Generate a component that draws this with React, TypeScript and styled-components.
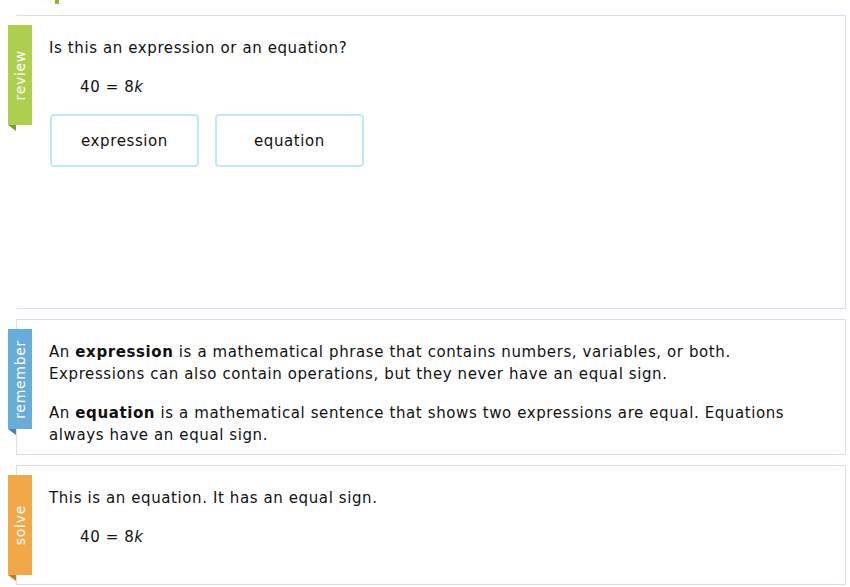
import React from "react";
import styled, { createGlobalStyle } from "styled-components";

const Global = createGlobalStyle`
  html, body { margin: 0; padding: 0; background: #ffffff; }
  body { font-family: "DejaVu Sans", Verdana, sans-serif; color: #111; }
`;

const Page = styled.div`
  width: 850px;
  padding: 0 0 0 8px;
  box-sizing: border-box;
  display: flex;
  flex-direction: column;
`;

const Stem = styled.div`
  width: 4px;
  height: 4px;
  margin: 0 0 11px 47px;
  background: #8fb63c;
`;

const Card = styled.section<{ $h: number; $gapped?: boolean }>`
  position: relative;
  box-sizing: border-box;
  width: 830px;
  min-height: ${(p) => p.$h}px;
  margin: 0 0 10px 8px;
  border: 1px solid #dedaf6;
  ${(p) =>
    p.$gapped
      ? `border-left-color: transparent;
         background: linear-gradient(to bottom,
           #dedaf6 0, #dedaf6 171px,
           transparent 171px, transparent 214px,
           #dedaf6 214px, #dedaf6 229px,
           transparent 229px, transparent 259px,
           #dedaf6 259px) -1px 0 / 1px 100% no-repeat;
         background-origin: border-box;`
      : ""}
  padding: 21px 32px 8px 32px;
  font-size: 15px;
  line-height: 22px;
  letter-spacing: 0.6px;
`;

const Tab = styled.div<{ $bg: string; $fold: string }>`
  position: absolute;
  left: -9px;
  top: 9px;
  width: 24px;
  height: 100px;
  background: ${(p) => p.$bg};
  display: flex;
  align-items: center;
  justify-content: center;
  &::after {
    content: "";
    position: absolute;
    left: 0;
    top: 100px;
    width: 0;
    height: 0;
    border-top: 6px solid ${(p) => p.$fold};
    border-left: 8px solid transparent;
  }
`;

const TabLabel = styled.span`
  writing-mode: vertical-rl;
  transform: rotate(180deg);
  color: #ffffff;
  font-size: 14px;
  line-height: 16px;
  letter-spacing: 0.7px;
`;

const Para = styled.p`
  margin: 0;
  & + & { margin-top: 17px; }
  b { font-weight: bold; }
`;

const Equation = styled.div`
  margin: 17px 0 0 31px;
  i { font-style: italic; }
`;

const Choices = styled.div`
  display: flex;
  gap: 16px;
  margin: 16px 0 0 1px;
`;

const Choice = styled.button`
  box-sizing: border-box;
  width: 149px;
  height: 53px;
  border: 2px solid #bfe8f7;
  border-radius: 4px;
  background: #ffffff;
  font-family: "DejaVu Sans", Verdana, sans-serif;
  font-size: 15px;
  letter-spacing: 0.6px;
  color: #111;
  padding: 0;
  cursor: pointer;
`;

const Eq = () => (
  <Equation>
    40 = 8<i>k</i>
  </Equation>
);

export default function App() {
  return (
    <>
      <Global />
      <Page>
        <Stem />
        <Card $h={294} $gapped>
          <Tab $bg="#aecf4e" $fold="#7e9b36">
            <TabLabel>review</TabLabel>
          </Tab>
          <Para>Is this an expression or an equation?</Para>
          <Eq />
          <Choices>
            <Choice>expression</Choice>
            <Choice>equation</Choice>
          </Choices>
        </Card>
        <Card $h={136}>
          <Tab $bg="#68acd9" $fold="#4781a8">
            <TabLabel>remember</TabLabel>
          </Tab>
          <Para>
            An <b>expression</b> is a mathematical phrase that contains numbers, variables, or both.
            Expressions can also contain operations, but they never have an equal sign.
          </Para>
          <Para>
            An <b>equation</b> is a mathematical sentence that shows two expressions are equal.
            Equations always have an equal sign.
          </Para>
        </Card>
        <Card $h={120}>
          <Tab $bg="#f2a748" $fold="#c27c27">
            <TabLabel>solve</TabLabel>
          </Tab>
          <Para>This is an equation. It has an equal sign.</Para>
          <Eq />
        </Card>
      </Page>
    </>
  );
}
